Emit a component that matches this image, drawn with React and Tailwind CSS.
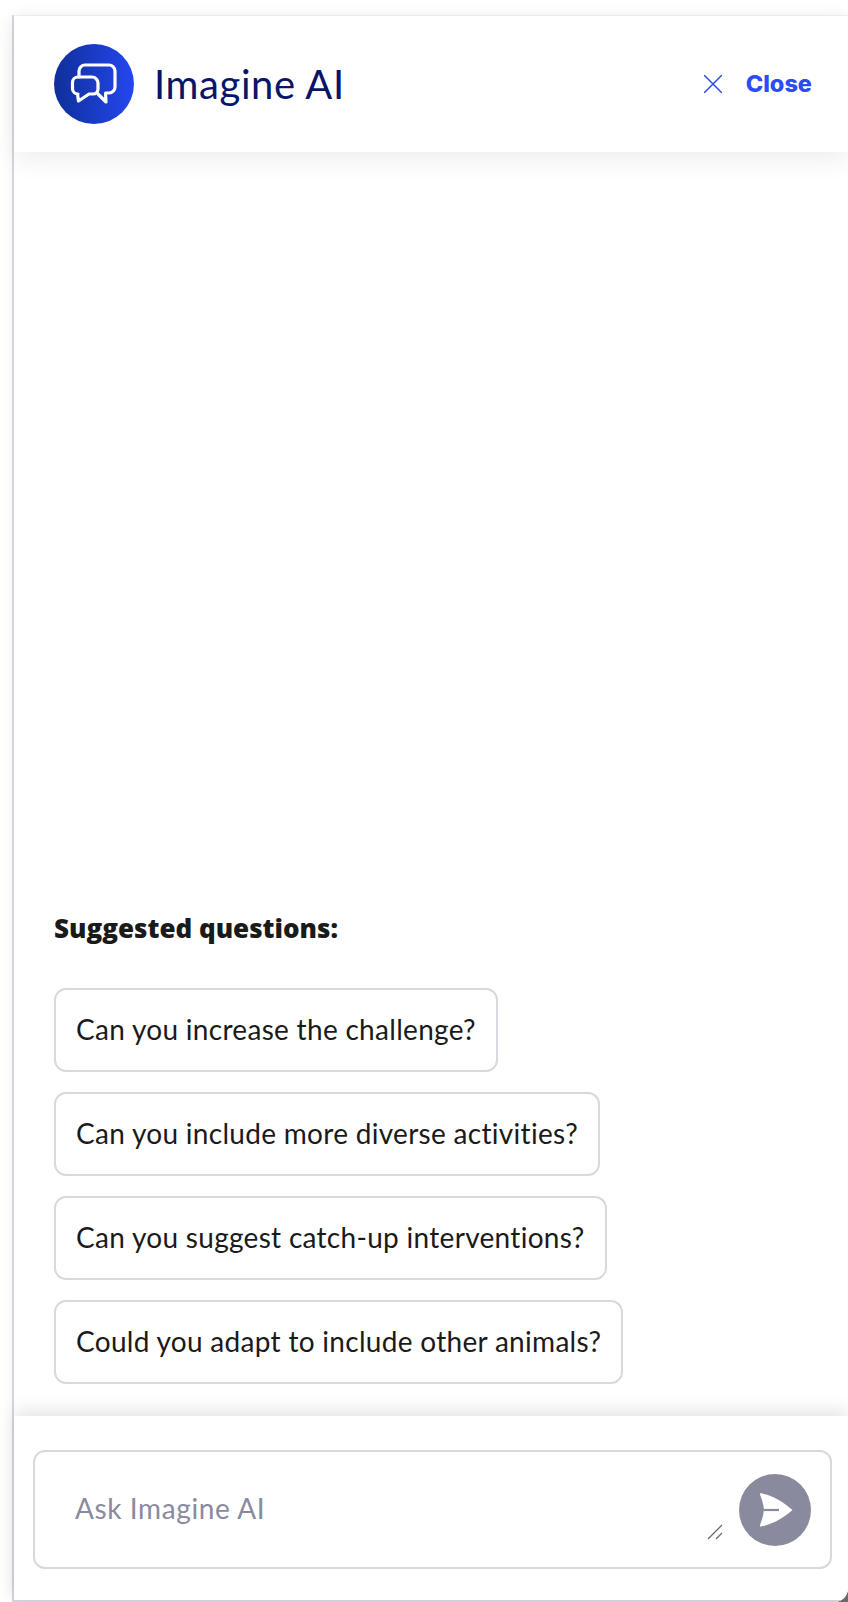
const questions = [
  'Can you increase the challenge?',
  'Can you include more diverse activities?',
  'Can you suggest catch-up interventions?',
  'Could you adapt to include other animals?',
];

const ChatIcon = () => (
  <svg width="80" height="80" viewBox="0 0 80 80" fill="none" stroke="white" strokeWidth="3.200" strokeLinejoin="round" strokeLinecap="round">
    <path d="M25 33V27a6 6 0 0 1 6-6h24a6 6 0 0 1 6 6v16a6 6 0 0 1-6 6h-3.500l.5 9-8-8" />
    <path d="M24 33h14a6 6 0 0 1 6 6v6a5 5 0 0 1-5 5h-4l-10.500 7-1-7H24a5.500 5.500 0 0 1-5.500-5.500V38.500A5.500 5.500 0 0 1 24 33z" />
  </svg>
);

const SendIcon = () => (
  <svg width="72" height="72" viewBox="0 0 72 72">
    <path d="M21 20.500c-.5-1.200.5-1.500 1.500-1.200 12 2.500 22 8.500 31 16.700-9 8-19 13.700-31 16.500-1 .2-2-.2-1.500-1.500 2-5 3.500-10 4-15.500-.5-5-2-10-4-15z" fill="white" />
    <path d="M25 36h15" stroke="#8a8a9e" strokeWidth="2.200" />
  </svg>
);

const App = () => {
  return (
    <div className="h-[1602px] w-[848px] overflow-hidden bg-[#6b6b6b] font-['Lato',sans-serif]">
      <div className="flex h-full flex-col overflow-hidden rounded-br-[14px] bg-white pt-[15px] pl-3">
        <div className="flex min-h-0 flex-1 flex-col border-t border-l-2 border-b-2 border-t-[#f0f0f0] border-l-[#d4d4dc] border-b-[#d4d4dc] bg-white shadow-[0_0_12px_rgba(0,0,0,0.05)]">
          {/* Header */}
          <header className="relative z-10 flex h-[136px] shrink-0 items-center justify-between bg-white pr-9 pl-10 shadow-[0_8px_24px_rgba(0,0,0,0.07)]">
            <div className="flex items-center gap-5">
              <div className="flex h-20 w-20 items-center justify-center rounded-full bg-gradient-to-r from-[#0f2f9a] to-[#2447f0]">
                <ChatIcon />
              </div>
              <h1 className="text-[40px] leading-none font-normal tracking-[0.6px] text-[#0a1468]">Imagine AI</h1>
            </div>
            <button className="flex items-center gap-6 font-['Inter',sans-serif] text-[23.500px] font-extrabold text-[#2b4cf0]">
              <svg width="18" height="18" viewBox="0 0 18 18" fill="none" stroke="#2b4cf0" strokeWidth="1.500">
                <path d="M0 0l18 18M18 0L0 18" />
              </svg>
              Close
            </button>
          </header>

          {/* Suggested questions */}
          <main className="flex min-h-0 flex-1 flex-col items-start justify-end gap-5 pb-8 pl-10">
            <h2 className="mb-[21px] font-['Open_Sans',sans-serif] text-[26px] leading-[37px] font-extrabold text-[#1a1a1a]">Suggested questions:</h2>
            {questions.map((question) => (
              <button
                key={question}
                className="flex h-[84px] items-center rounded-xl border-2 border-[#d8d8e0] bg-white px-5 pb-0.5 text-[28px] tracking-[0.3px] text-[#1a1a1a]"
              >
                {question}
              </button>
            ))}
          </main>

          {/* Composer */}
          <footer className="relative z-10 h-[184px] shrink-0 bg-white pt-[34px] pr-4 pl-[19px] shadow-[0_-6px_16px_rgba(0,0,0,0.1)]">
            <div className="flex h-[119px] items-center gap-2 rounded-xl border-2 border-[#d8d8e0] bg-white pr-[19px]">
              <div className="relative h-full flex-1">
                <textarea
                  placeholder="Ask Imagine AI"
                  className="h-full w-full resize-none bg-transparent py-[38px] pl-10 text-[28px] leading-9 tracking-[0.6px] text-[#1a1a1a] outline-none placeholder:text-[#8a8a9e]"
                />
                <svg className="absolute right-[8px] bottom-[27px]" width="16" height="16" viewBox="0 0 16 16" fill="none" stroke="#666" strokeWidth="1.200">
                  <path d="M1 15L15 1M9 15l6-6" />
                </svg>
              </div>
              <button className="h-[72px] w-[72px] shrink-0 rounded-full bg-[#8a8a9e]">
                <SendIcon />
              </button>
            </div>
          </footer>
        </div>
      </div>
    </div>
  );
};

export default App;
